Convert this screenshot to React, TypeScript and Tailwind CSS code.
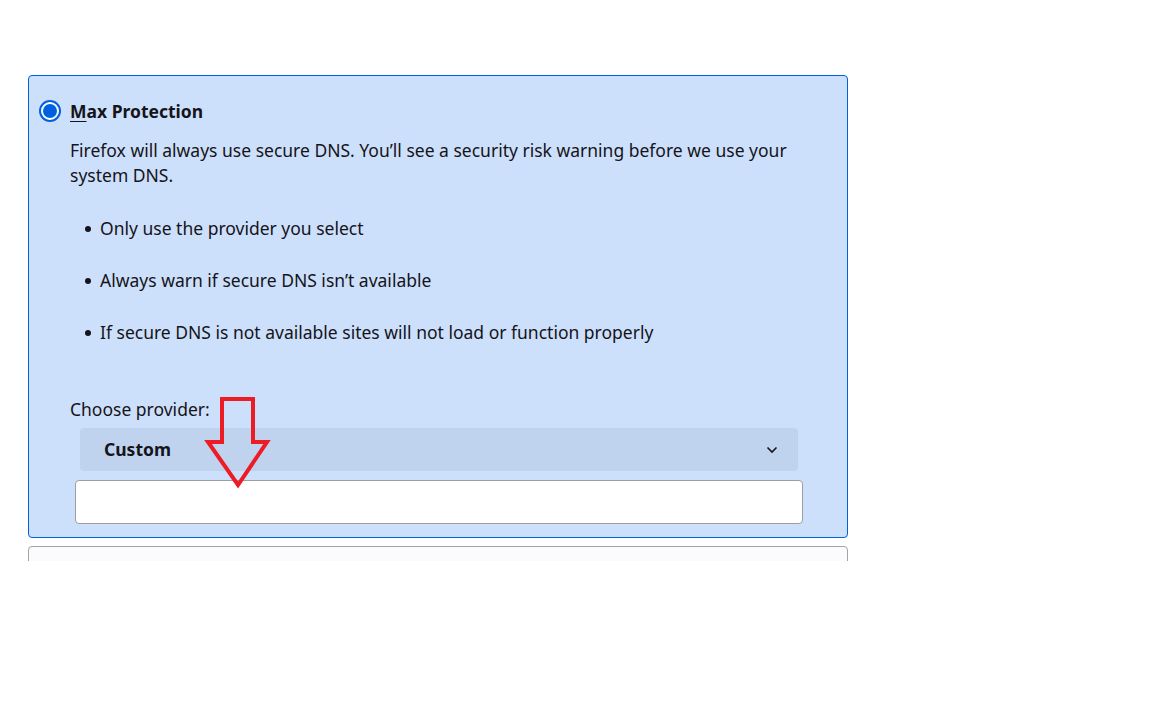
import React from "react";

const bullets = [
  "Only use the provider you select",
  "Always warn if secure DNS isn\u2019t available",
  "If secure DNS is not available sites will not load or function properly",
];

function RedArrow() {
  return (
    <svg
      className="pointer-events-none absolute left-[204px] top-[396px]"
      width="68"
      height="94"
      viewBox="0 0 68 94"
    >
      <polygon
        points="18,3 49,3 49,46 63,46 34,89 4,46 18,46"
        fill="none"
        stroke="#ed1c24"
        strokeWidth="4"
        strokeLinejoin="miter"
      />
    </svg>
  );
}

export default function App() {
  return (
    <div
      className="relative h-[720px] w-[1152px] bg-white text-[#15141a]"
      style={{ fontFamily: '"Noto Sans", "Open Sans", sans-serif' }}
    >
      <div className="h-[561px] overflow-hidden pl-[28px] pt-[75px]">
        <div className="w-[820px] rounded-[4px] border border-[#0061e0] bg-[#cde0fb] pb-[13px] pl-[10px] pr-[44px] pt-[22px]">
          <div className="flex items-center gap-[9px]">
            <span className="flex h-[22px] w-[22px] items-center justify-center rounded-full border-2 border-[#0061e0] bg-white">
              <span className="h-[14px] w-[14px] rounded-full bg-[#0061e0]" />
            </span>
            <span className="text-[17.5px] font-bold leading-[26px]">
              <span className="underline underline-offset-[3px]">M</span>ax Protection
            </span>
          </div>
          <div className="pl-[31px]">
            <p className="mt-[14px] text-[17.5px] leading-[25px]">
              Firefox will always use secure DNS. You’ll see a security risk warning before we use your system DNS.
            </p>
            <ul className="mt-[28px] flex flex-col gap-[27px] pl-[15px]">
              {bullets.map((b) => (
                <li key={b} className="flex items-center gap-[9px] text-[17.5px] leading-[25px]">
                  <span className="h-[6px] w-[6px] rounded-full bg-[#15141a]" />
                  {b}
                </li>
              ))}
            </ul>
            <p className="mt-[52px] text-[17.5px] leading-[25px]">Choose provider:</p>
            <div className="ml-[10px] mt-[6px] flex h-[43px] w-[718px] items-center justify-between rounded-[4px] bg-[#bfd3ee] pl-[24px] pr-[20px]">
              <span className="text-[17.5px] font-bold">Custom</span>
              <svg width="12" height="8" viewBox="0 0 12 8">
                <path d="M1.5 1.5 L6 6 L10.5 1.5" fill="none" stroke="#15141a" strokeWidth="1.6" />
              </svg>
            </div>
            <div className="ml-[5px] mt-[9px] h-[44px] w-[728px] rounded-[4px] border border-[#9e9e9e] bg-white" />
          </div>
        </div>
        <div className="mt-[8px] h-[40px] w-[820px] rounded-[4px] border border-[#a3a3a8] bg-[#fbfbfe]" />
      </div>
      <RedArrow />
    </div>
  );
}
